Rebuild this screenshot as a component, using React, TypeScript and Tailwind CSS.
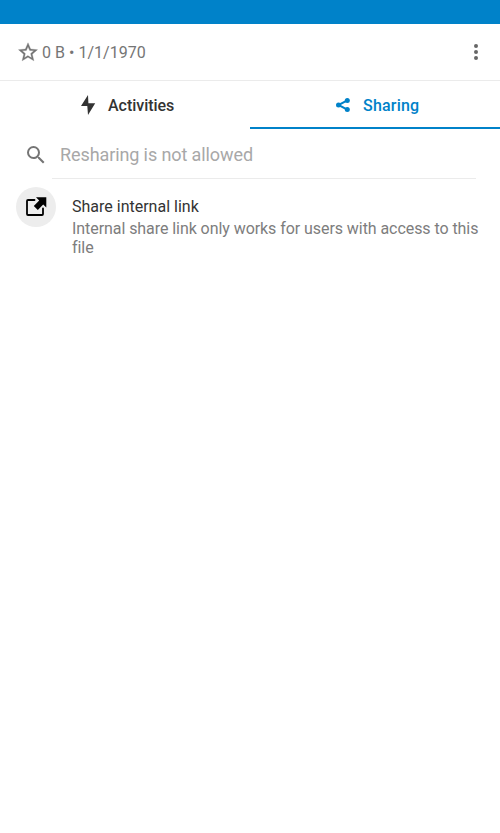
import React from "react";

export default function App() {
  return (
    <div className="flex h-[833px] w-[500px] flex-col bg-white font-['Roboto',sans-serif] text-[#757575]">
      <div className="h-6 bg-[#0082c9]" />
      <header className="flex h-[57px] items-center border-b border-[#ebebeb] pl-[18px] pr-3">
        <svg viewBox="1.500 1.200 21 21" className="size-5 fill-[#757575] stroke-[#757575]" strokeWidth=".3"><path d="M12,15.39L8.24,17.66L9.23,13.38L5.91,10.5L10.29,10.13L12,6.09L13.71,10.13L18.09,10.5L14.77,13.38L15.76,17.66M22,9.24L14.81,8.63L12,2L9.19,8.63L2,9.24L7.45,13.97L5.82,21L12,17.27L18.18,21L16.54,13.97L22,9.24Z" /></svg>
        <span className="ml-1 flex-1 pt-px text-base tracking-[0.03px]">0 B • 1/1/1970</span>
        <svg viewBox="0 0 24 24" className="size-6 fill-[#666666]"><path d="M12 8a2 2 0 1 0 0-4 2 2 0 0 0 0 4zm0 2a2 2 0 1 0 0 4 2 2 0 0 0 0-4zm0 6a2 2 0 1 0 0 4 2 2 0 0 0 0-4z" /></svg>
      </header>
      <nav className="grid h-12 grid-cols-2 text-base font-medium">
        <div className="flex items-center pl-[78px] text-[#333333]">
          <svg viewBox="0 0 20 20" className="size-5 fill-[#333333]"><path d="M10 0L3 11H9.300L10 20L17.200 8.300H10.400Z" /></svg>
          <span className="ml-[10px] pt-[2px] tracking-[-0.03px]">Activities</span>
        </div>
        <div className="flex items-center border-b-2 border-[#0082c9] pl-[85px] pt-[2px] text-[#0082c9]">
          <svg viewBox="0 0 16 16" className="size-4 fill-[#0082c9]"><path d="M12.300 3.300L3.500 8l8.800 4.700" fill="none" stroke="#0082c9" strokeWidth="2" /><circle cx="12.300" cy="3.400" r="2.500" /><circle cx="3.500" cy="8" r="2.500" /><circle cx="12.300" cy="12.600" r="2.500" /></svg>
          <span className="ml-3 pt-[2px] tracking-[0.2px]">Sharing</span>
        </div>
      </nav>
      <div className="flex h-[50px] pl-6 pr-6">
        <svg viewBox="0 0 24 24" className="mt-[14px] size-6 fill-[#757575]"><path d="M15.500 14h-.79l-.28-.27A6.471 6.471 0 0 0 16 9.500 6.500 6.500 0 1 0 9.500 16c1.610 0 3.090-.59 4.230-1.570l.27.28v.79l5 4.990L20.490 19l-4.990-5zm-6 0C7.010 14 5 11.990 5 9.500S7.010 5 9.500 5 14 7.010 14 9.500 11.990 14 9.500 14z" /></svg>
        <div className="ml-1 flex flex-1 items-center border-b border-[#ebebeb] pl-2 pt-[2px] text-[18px] tracking-[-0.1px] text-[#a8a8a8]">Resharing is not allowed</div>
      </div>
      <div className="flex pl-4 pt-2">
        <div className="flex size-10 items-center justify-center rounded-full bg-[#ededed]">
          <svg viewBox="0 0 24 24" className="size-6"><path d="M10.500 5H4Q3 5 3 6v13q0 1 1 1h14q1 0 1-1v-5.500" fill="none" stroke="#000" strokeWidth="1.800" strokeLinecap="round" /><path d="M12 2.200h10.300v10.300L19.200 9.600l-5.400 5.400-4-4 5.400-5.400z" /></svg>
        </div>
        <div className="ml-4 w-[412px] pt-[10px]">
          <div className="h-[22px] text-base leading-[19px] text-[#333333]">Share internal link</div>
          <div className="text-base leading-[19px] tracking-[-0.065px] text-[#7d7d7d]">Internal share link only works for users with access to this file</div>
        </div>
      </div>
    </div>
  );
}
